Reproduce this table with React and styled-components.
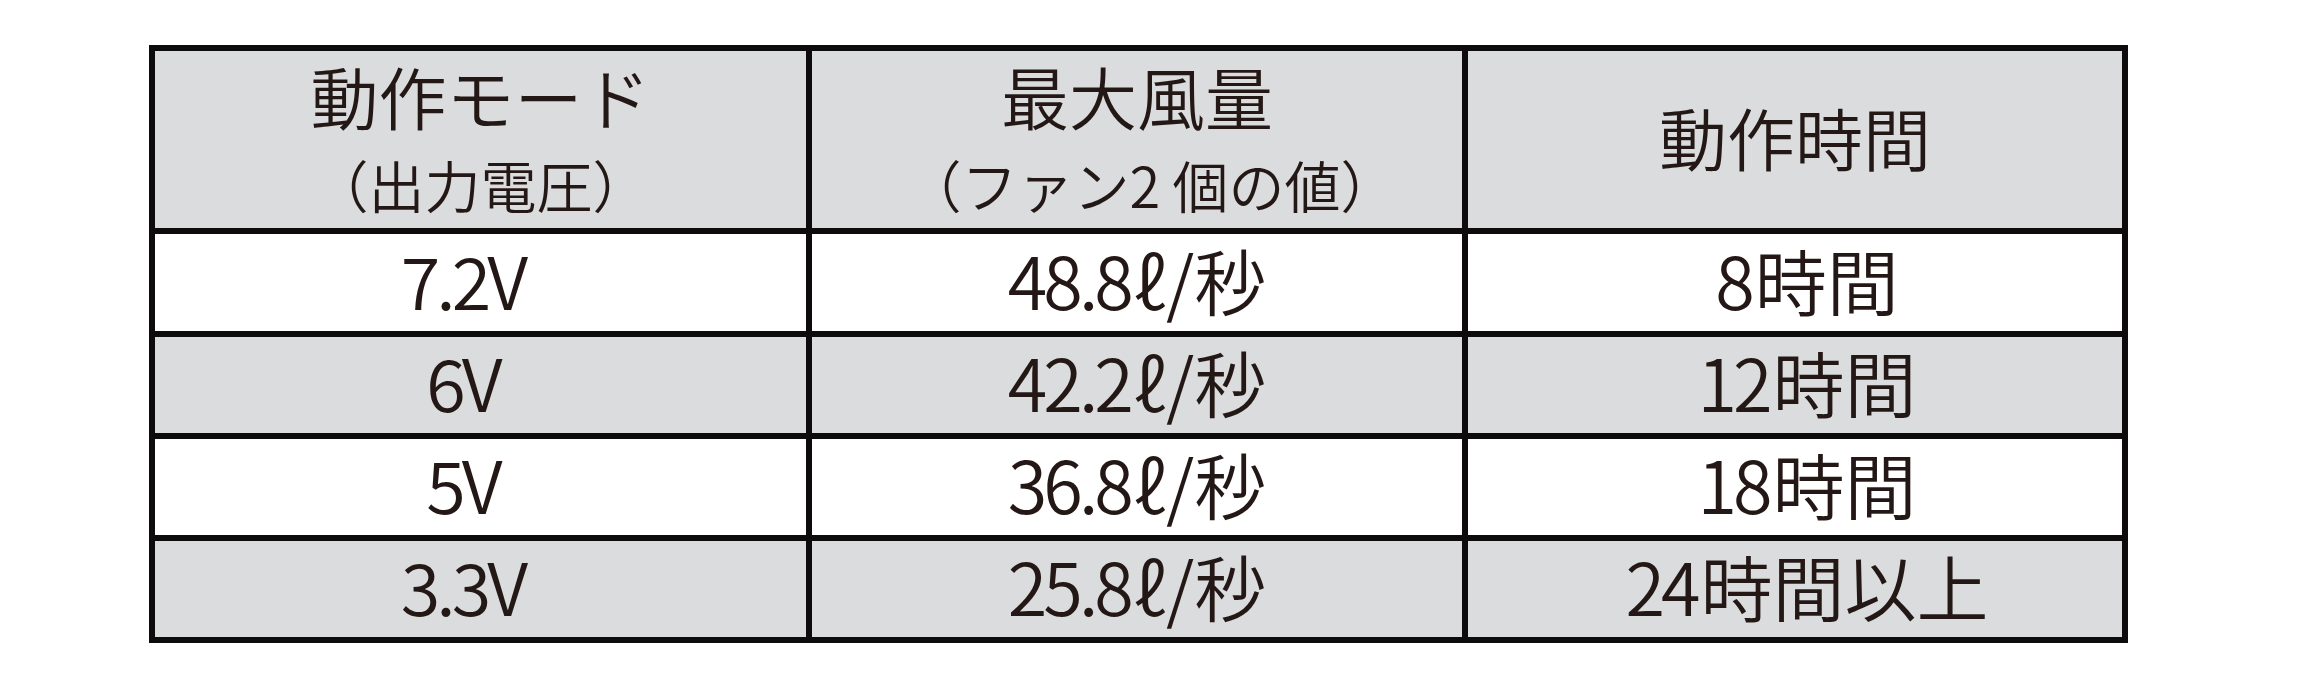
import React from "react";
import styled, { createGlobalStyle } from "styled-components";

const GlobalStyle = createGlobalStyle`
  html, body {
    margin: 0;
    padding: 0;
    background: #ffffff;
  }
  body {
    font-family: "Noto Sans CJK JP", "Noto Sans", sans-serif;
    color: #231815;
  }
`;

const Page = styled.div`
  padding: 45px 0 0 149px;
  width: 2299px;
  height: 691px;
  box-sizing: border-box;
`;

const Table = styled.div`
  display: grid;
  grid-template-columns: 651px 650px 654px;
  grid-template-rows: 177px 97px 96px 96px 96px;
  gap: 6px;
  padding: 6px;
  width: 1979px;
  box-sizing: border-box;
  background: #0d0b0b;
`;

const Cell = styled.div`
  display: flex;
  flex-direction: column;
  align-items: center;
  justify-content: center;
  box-sizing: border-box;
  padding-left: ${(p) => (p.$shift > 0 ? p.$shift * 2 : 0)}px;
  padding-right: ${(p) => (p.$shift < 0 ? -p.$shift * 2 : 0)}px;
  background: ${(p) => (p.$shaded ? "#dbdcdd" : "#ffffff")};
  color: #231815;
  text-align: center;
  white-space: nowrap;
`;

const HeadMain = styled.div`
  font-size: 68px;
  line-height: 88px;
  font-weight: 350;
  padding-bottom: ${(p) => (p.$solo ? 6 : 0)}px;
`;

const HeadSub = styled.div`
  font-size: 56px;
  line-height: 88px;
  font-weight: 350;
  padding-left: ${(p) => p.$indent || 0}px;
`;

const Value = styled.div`
  font-size: 72px;
  line-height: 96px;
  padding-bottom: 8px;
  font-weight: 350;
`;

const Num = styled.span`
  letter-spacing: -4px;
  margin-right: 4px;
`;

const shifts = [-16, 0, 12];

const rows = [
  [["7.2V", ""], ["48.8", "ℓ/秒"], ["8", "時間"]],
  [["6V", ""], ["42.2", "ℓ/秒"], ["12", "時間"]],
  [["5V", ""], ["36.8", "ℓ/秒"], ["18", "時間"]],
  [["3.3V", ""], ["25.8", "ℓ/秒"], ["24", "時間以上"]],
];

export default function App() {
  return (
    <>
      <GlobalStyle />
      <Page>
        <Table>
          <Cell $shaded>
            <HeadMain>動作モード</HeadMain>
            <HeadSub>（出力電圧）</HeadSub>
          </Cell>
          <Cell $shaded>
            <HeadMain>最大風量</HeadMain>
            <HeadSub $indent={28}>（ファン2 個の値）</HeadSub>
          </Cell>
          <Cell $shaded>
            <HeadMain $solo>動作時間</HeadMain>
          </Cell>
          {rows.map((r, i) =>
            r.map(([num, rest], j) => (
              <Cell key={`${i}-${j}`} $shaded={i % 2 === 1} $shift={shifts[j]}>
                <Value>
                  <Num>{num}</Num>
                  {rest}
                </Value>
              </Cell>
            ))
          )}
        </Table>
      </Page>
    </>
  );
}
